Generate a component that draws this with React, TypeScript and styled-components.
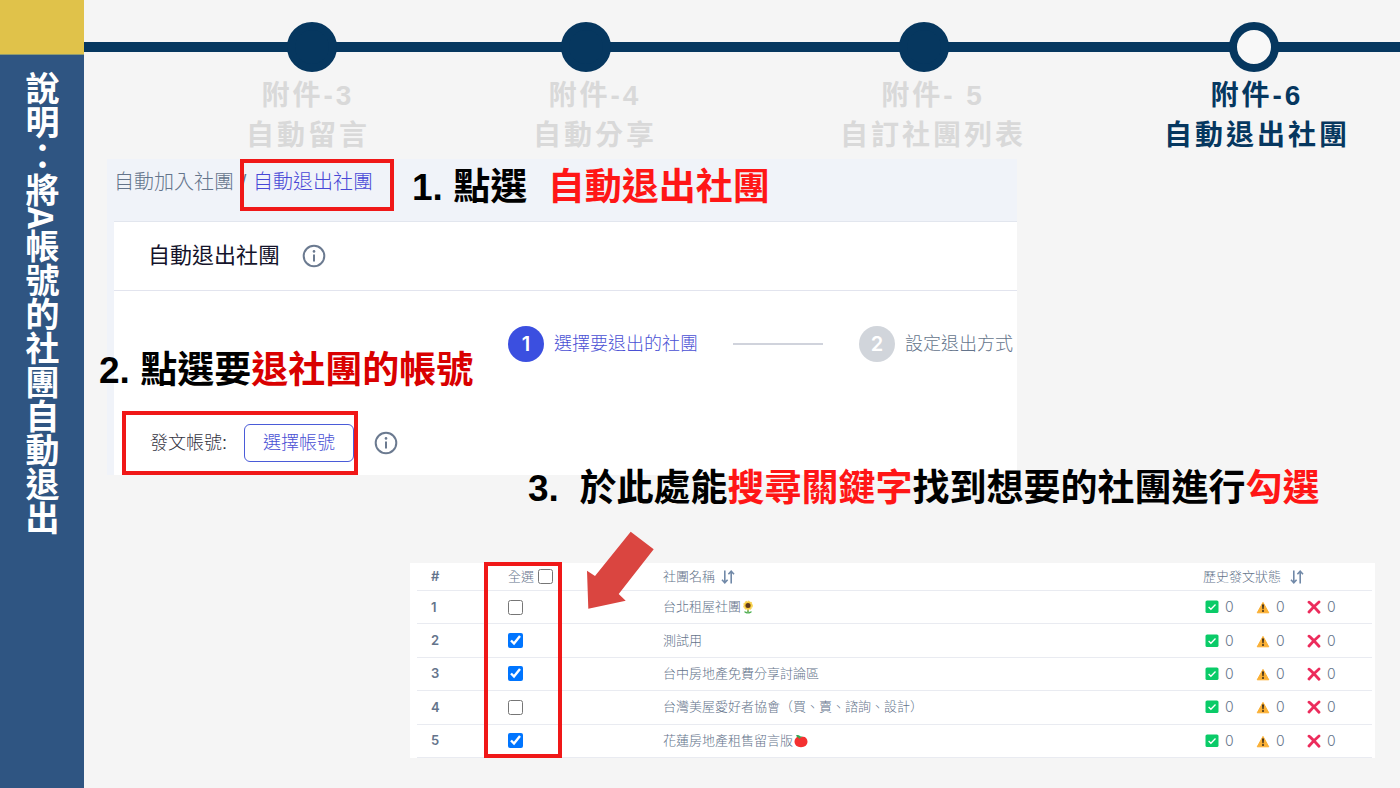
import React from 'react';
import styled, { createGlobalStyle, css } from 'styled-components';

const GlobalStyle = createGlobalStyle`
  * { box-sizing: border-box; }
  body {
    margin: 0;
    background: #f5f5f5;
    font-family: "Liberation Sans", "Noto Sans CJK TC", sans-serif;
    color: #000;
  }
  h1, h2, p, ol { margin: 0; padding: 0; }
`;

const marker = css`
  border: 4px solid #f01818;
  pointer-events: none;
`;

const Page = styled.div`
  display: flex;
  min-height: 100vh;
`;

const Sidebar = styled.aside`
  flex: 0 0 84px;
  display: flex;
  flex-direction: column;
  align-items: center;
  background: #2f5582;
`;

const Accent = styled.div`
  align-self: stretch;
  height: 55px;
  border-bottom: 1px solid #8f9c70;
  background: #e0c24a;
`;

const SideTitle = styled.h1`
  margin-top: 16px;
  writing-mode: vertical-rl;
  font-family: "Noto Sans CJK TC", sans-serif;
  font-size: 34px;
  line-height: 40px;
  font-weight: 700;
  color: #fff;
  white-space: nowrap;
`;

const Main = styled.main`
  flex: 1;
  min-width: 0;
  display: flex;
  flex-direction: column;
`;

const Timeline = styled.header`
  height: 159px;
  padding-top: 22px;
`;

const Track = styled.div`
  display: grid;
  grid-template-columns: 274fr 274fr 402fr 258fr;
  justify-items: center;
  padding: 0 17px 0 91px;
  background: linear-gradient(#06375f, #06375f) center / 100% 10px no-repeat;
`;

const Dot = styled.span<{ $open?: boolean }>`
  width: 50px;
  height: 50px;
  border: 8px solid #06375f;
  border-radius: 50%;
  background: ${(p) => (p.$open ? '#f8f8f8' : '#06375f')};
`;

const Labels = styled.ol`
  display: grid;
  grid-template-columns: 288fr 286fr 390fr 258fr;
  padding: 4px 14px 0 80px;
  list-style: none;
`;

const Label = styled.li<{ $active?: boolean }>`
  text-align: center;
  font-size: 28px;
  line-height: 40px;
  font-weight: 700;
  letter-spacing: 3px;
  white-space: nowrap;
  color: ${(p) => (p.$active ? '#06375f' : '#d9d9d9')};
`;

const Panel = styled.section`
  position: relative;
  margin: 0 383px 0 23px;
  padding-left: 7px;
  background: #f0f3f9;
`;

const Breadcrumb = styled.nav`
  display: flex;
  align-items: flex-start;
  height: 62px;
  padding-top: 11px;
  font-size: 20px;
  line-height: 24px;
  font-weight: 300;
  color: #64748b;
`;

const Crumb = styled.a`
  color: inherit;
  text-decoration: none;
  white-space: nowrap;
`;

const Slash = styled.span`
  width: 19px;
  text-align: center;
`;

const CurrentCrumb = styled(Crumb)`
  position: relative;
  color: #4747d6;
  &::after {
    content: "";
    position: absolute;
    inset: -11px -21px -17px -13px;
    ${marker}
  }
`;

const Card = styled.div`
  border-top: 1px solid #e2e6ee;
  background: #fff;
`;

const CardHeader = styled.div`
  display: flex;
  align-items: center;
  gap: 22px;
  height: 69px;
  padding-left: 34px;
  border-bottom: 1px solid #e2e4ee;
`;

const CardTitle = styled.h2`
  font-size: 22px;
  line-height: 32px;
  font-weight: 400;
  color: #14142b;
`;

const Steps = styled.div`
  display: flex;
  justify-content: flex-end;
  align-items: center;
  padding: 35px 4px 0 0;
`;

const Step = styled.div<{ $active?: boolean }>`
  display: flex;
  align-items: center;
  gap: 10px;
  font-size: 18px;
  line-height: 24px;
  font-weight: 300;
  white-space: nowrap;
  color: ${(p) => (p.$active ? '#4a50d4' : '#64748b')};
`;

const StepNumber = styled.span<{ $active?: boolean }>`
  display: grid;
  place-items: center;
  width: 36px;
  height: 36px;
  border-radius: 50%;
  background: ${(p) => (p.$active ? '#3b4fe0' : '#d1d5db')};
  color: #fff;
  font-family: Inter, sans-serif;
  font-size: 20px;
  font-weight: 600;
`;

const Connector = styled.span`
  width: 90px;
  height: 2px;
  margin: 0 36px 0 35px;
  background: #d0d3dc;
`;

const AccountRow = styled.div`
  display: flex;
  align-items: center;
  gap: 16px;
  padding: 49px 0 0 8px;
`;

const AccountGroup = styled.div`
  display: flex;
  align-items: center;
  height: 64px;
  padding-left: 24px;
  ${marker}
  pointer-events: auto;
`;

const AccountLabel = styled.span`
  width: 94px;
  font-size: 18px;
  line-height: 24px;
  font-weight: 300;
  color: #33333f;
`;

const AccountButton = styled.button`
  width: 110px;
  height: 38px;
  padding: 0;
  border: 1px solid #4a5bd8;
  border-radius: 6px;
  background: #fff;
  color: #4a50d4;
  font-family: inherit;
  font-size: 18px;
  line-height: 24px;
  font-weight: 300;
`;

const Note = styled.p`
  font-size: 37px;
  line-height: 40px;
  font-weight: 700;
  white-space: pre;
`;

const OverlayNote = styled(Note)<{ $left: number; $top: number }>`
  position: absolute;
  left: ${(p) => p.$left}px;
  top: ${(p) => p.$top}px;
`;

const FlowNote = styled(Note)`
  position: relative;
  margin-left: 444px;
  line-height: 28px;
`;

const Red = styled.span<{ $deep?: boolean }>`
  color: ${(p) => (p.$deep ? '#d90000' : '#ff1616')};
`;

const TableArea = styled.section`
  position: relative;
  margin: 60px 25px 0 326px;
  padding: 0 3px 0 7px;
  background: #fff;
`;

const SelectMarker = styled.div`
  position: absolute;
  left: 74px;
  top: -1px;
  bottom: 0;
  width: 78px;
  ${marker}
`;

const Arrow = styled.svg`
  position: absolute;
  left: 176px;
  top: -32px;
`;

const Table = styled.table`
  width: 100%;
  height: 195px;
  table-layout: fixed;
  border-collapse: separate;
  border-spacing: 0;
  font-size: 13px;
  line-height: 20px;
  color: #64748b;
`;

const Head = styled.th<{ $width?: number }>`
  width: ${(p) => (p.$width ? `${p.$width}px` : 'auto')};
  height: 28px;
  padding: 0 0 0 14px;
  border-bottom: 1px solid #e9ebf1;
  text-align: left;
  font-weight: 300;
  white-space: nowrap;
`;

const Cell = styled.td`
  padding: 0 0 0 14px;
  border-bottom: 1px solid #e9ebf1;
  font-weight: 300;
  white-space: nowrap;
`;

const Index = styled.span`
  font-family: Inter, sans-serif;
  font-size: 13px;
  font-weight: 600;
`;

const Inline = styled.span<{ $gap: number }>`
  display: flex;
  align-items: center;
  gap: ${(p) => p.$gap}px;
`;

const SelectAll = styled.label`
  display: flex;
  align-items: center;
  gap: 4px;
`;

const Check = styled.input`
  display: block;
  width: 15px;
  height: 15px;
  margin: 0;
  accent-color: #0075ff;
`;

const Status = styled.span`
  display: flex;
  align-items: center;
  gap: 6px;
  width: 51px;
  font-family: Inter, sans-serif;
  font-size: 14px;
`;

const Statuses = styled.div`
  display: flex;
  padding-left: 2px;
`;

const InfoIcon = () => (
  <svg width="24" height="24" viewBox="0 0 24 24" fill="none" stroke="#6b7a90" strokeWidth="2">
    <circle cx="12" cy="12" r="10.3" />
    <path d="M12 10.5v7" />
    <circle cx="12" cy="7.4" r="1.3" fill="#6b7a90" stroke="none" />
  </svg>
);

const SortIcon = () => (
  <svg width="14" height="14" viewBox="0 0 14 14" fill="none" stroke="#7189a8" strokeWidth="1.6">
    <path d="M3.8 0.5v12M1 9.8l2.8 3 2.8-3M10.2 13.5v-12M7.4 4.2l2.8-3 2.8 3" />
  </svg>
);

const OkIcon = () => (
  <svg width="14" height="14" viewBox="0 0 14 14">
    <rect x="0.5" y="0.5" width="13" height="12.6" rx="1.6" fill="#0acb68" />
    <path d="M3.6 7l2.3 2.3 4.6-4.8" fill="none" stroke="#fff" strokeWidth="1.3" />
  </svg>
);

const WarnIcon = () => (
  <svg width="14" height="14" viewBox="0 0 14 14">
    <path d="M7 2.4L12.800 12.800H1.200z" fill="#fbb034" stroke="#fbb034" strokeLinejoin="round" />
    <path d="M6 4.6h2l-.4 4.6H6.4z" fill="#3a2c1c" />
    <circle cx="7" cy="11" r="1" fill="#3a2c1c" />
  </svg>
);

const FailIcon = () => (
  <svg width="14" height="14" viewBox="0 0 14 14">
    <path d="M2 2.2C5 4.6 9 9 12 12.2M12 2C8.6 5 5 8.6 2 12" fill="none" stroke="#ec2c5c" strokeWidth="2.8" strokeLinecap="round" />
  </svg>
);

const Sunflower = () => (
  <svg width="12" height="14" viewBox="0 0 12 14" role="img" aria-label="向日葵">
    <path d="M6 8v5" stroke="#3e9a3c" strokeWidth="1.4" />
    <path d="M2 11.5c2-.4 3 .3 4 1.7 1-1.4 2-2.1 4-1.7-.6 1.5-2 2-4 2s-3.4-.5-4-2z" fill="#4caf50" />
    <circle cx="6" cy="5.5" r="4" fill="#f7c52d" stroke="#f7d55a" strokeWidth="1.8" strokeDasharray="1.8 .8" />
    <circle cx="6" cy="5.5" r="2.5" fill="#5e3a1c" />
  </svg>
);

const Tomato = () => (
  <svg width="14" height="14" viewBox="0 0 14 14" role="img" aria-label="番茄">
    <path d="M7 3.2C10.5 1.6 13.5 4 13.5 7.6c0 3.4-2.5 5.7-6.5 5.7S.5 11 .5 7.6C.5 4 3.5 1.6 7 3.2z" fill="#f43030" />
    <path d="M1.8 1.2c1.900-.6 3.300-.2 4.400 1l2.600.6-2.200.8-1.600 1.400-.7-1.700-2.300-.2 1.200-.8z" fill="#35a853" />
  </svg>
);

const milestones = [
  ['附件-3', '自動留言'],
  ['附件-4', '自動分享'],
  ['附件- 5', '自訂社團列表'],
  ['附件-6', '自動退出社團'],
];

const groups: { name: string; checked: boolean; icon?: React.ReactNode }[] = [
  { name: '台北租屋社團', checked: false, icon: <Sunflower /> },
  { name: '測試用', checked: true },
  { name: '台中房地產免費分享討論區', checked: true },
  { name: '台灣美屋愛好者協會（買、賣、諮詢、設計）', checked: false },
  { name: '花蓮房地產租售留言版', checked: true, icon: <Tomato /> },
];

export default function App() {
  return (
    <>
      <GlobalStyle />
      <Page>
        <Sidebar>
          <Accent />
          <SideTitle>說明：將A帳號的社團自動退出</SideTitle>
        </Sidebar>
        <Main>
          <Timeline>
            <Track>
              {milestones.map(([id], i) => (
                <Dot key={id} $open={i === milestones.length - 1} />
              ))}
            </Track>
            <Labels>
              {milestones.map(([id, title], i) => (
                <Label key={id} $active={i === milestones.length - 1}>
                  {id}
                  <br />
                  {title}
                </Label>
              ))}
            </Labels>
          </Timeline>

          <Panel>
            <Breadcrumb>
              <Crumb href="#join">自動加入社團</Crumb>
              <Slash>/</Slash>
              <CurrentCrumb href="#leave">自動退出社團</CurrentCrumb>
            </Breadcrumb>
            <Card>
              <CardHeader>
                <CardTitle>自動退出社團</CardTitle>
                <InfoIcon />
              </CardHeader>
              <Steps>
                <Step $active>
                  <StepNumber $active>1</StepNumber>
                  選擇要退出的社團
                </Step>
                <Connector />
                <Step>
                  <StepNumber>2</StepNumber>
                  設定退出方式
                </Step>
              </Steps>
              <AccountRow>
                <AccountGroup>
                  <AccountLabel>發文帳號:</AccountLabel>
                  <AccountButton type="button">選擇帳號</AccountButton>
                </AccountGroup>
                <InfoIcon />
              </AccountRow>
            </Card>
            <OverlayNote $left={305} $top={9}>
              {'1. 點選  '}
              <Red>自動退出社團</Red>
            </OverlayNote>
            <OverlayNote $left={-8} $top={192}>
              2. 點選要<Red $deep>退社團的帳號</Red>
            </OverlayNote>
          </Panel>

          <FlowNote>
            {'3.  於此處能'}
            <Red>搜尋關鍵字</Red>找到想要的社團進行<Red>勾選</Red>
          </FlowNote>

          <TableArea>
            <Table>
              <thead>
                <tr>
                  <Head $width={77}>
                    <Index>#</Index>
                  </Head>
                  <Head $width={155}>
                    <SelectAll>
                      全選
                      <Check type="checkbox" />
                    </SelectAll>
                  </Head>
                  <Head>
                    <Inline $gap={6}>
                      社團名稱
                      <SortIcon />
                    </Inline>
                  </Head>
                  <Head $width={183}>
                    <Inline $gap={9}>
                      歷史發文狀態
                      <SortIcon />
                    </Inline>
                  </Head>
                </tr>
              </thead>
              <tbody>
                {groups.map((g, i) => (
                  <tr key={g.name}>
                    <Cell>
                      <Index>{i + 1}</Index>
                    </Cell>
                    <Cell>
                      <Check type="checkbox" defaultChecked={g.checked} aria-label={g.name} />
                    </Cell>
                    <Cell>
                      <Inline $gap={1}>
                        {g.name}
                        {g.icon}
                      </Inline>
                    </Cell>
                    <Cell>
                      <Statuses>
                        <Status><OkIcon />0</Status>
                        <Status><WarnIcon />0</Status>
                        <Status><FailIcon />0</Status>
                      </Statuses>
                    </Cell>
                  </tr>
                ))}
              </tbody>
            </Table>
            <SelectMarker />
            <Arrow width="70" height="80" viewBox="0 0 70 80">
              <path d="M44.7 0.7L67.7 18.3 32.7 63 39.7 69.7 2.3 77.7 1 39.7 9 45z" fill="#da4540" />
            </Arrow>
          </TableArea>
        </Main>
      </Page>
    </>
  );
}
